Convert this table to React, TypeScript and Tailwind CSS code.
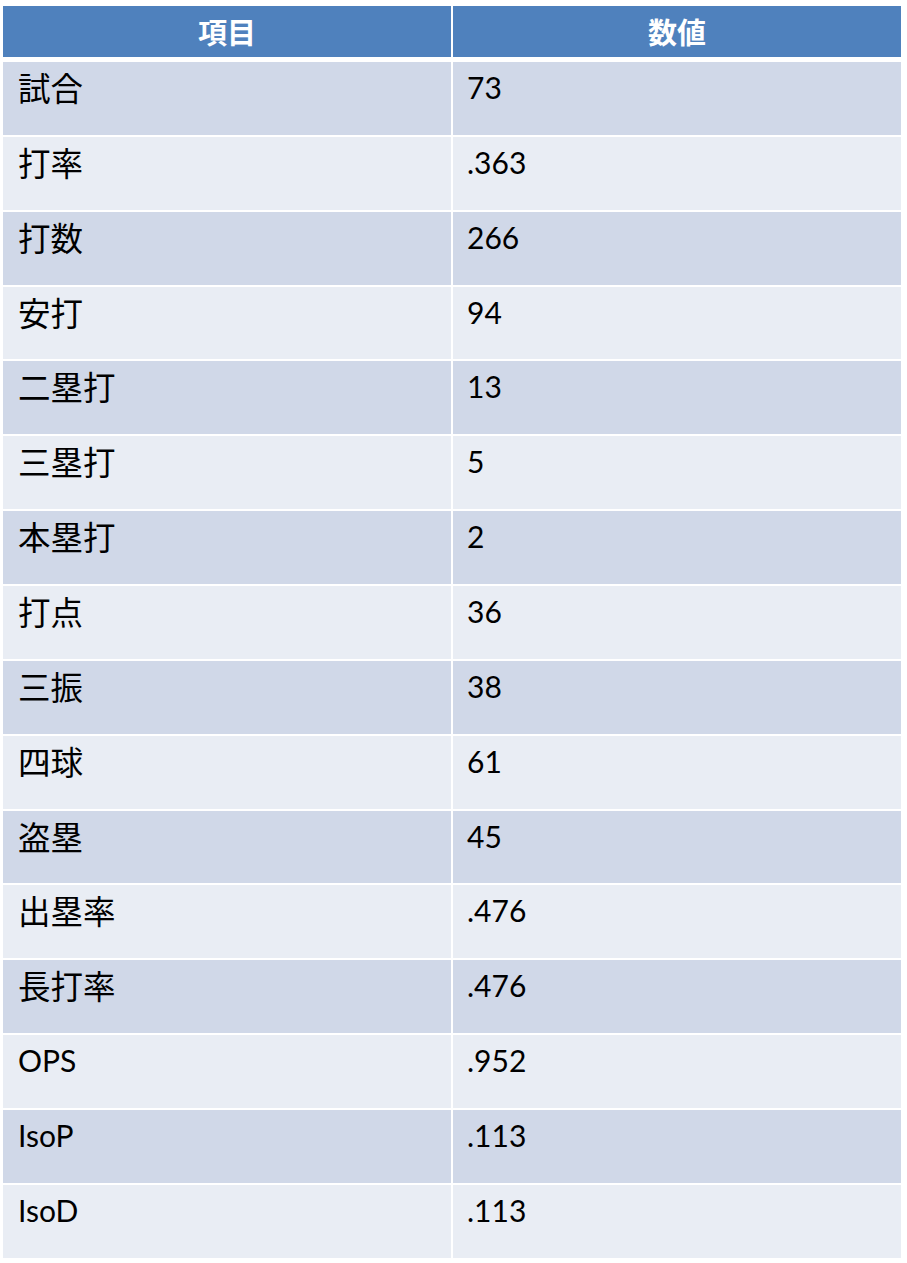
import React from "react";

const rows: [string, string][] = [
  ["試合", "73"],
  ["打率", ".363"],
  ["打数", "266"],
  ["安打", "94"],
  ["二塁打", "13"],
  ["三塁打", "5"],
  ["本塁打", "2"],
  ["打点", "36"],
  ["三振", "38"],
  ["四球", "61"],
  ["盗塁", "45"],
  ["出塁率", ".476"],
  ["長打率", ".476"],
  ["OPS", ".952"],
  ["IsoP", ".113"],
  ["IsoD", ".113"],
];

const isLatin = (s: string) => /^[A-Za-z0-9.]+$/.test(s);

export default function App() {
  return (
    <div className="w-[907px] h-[1263px] bg-white pt-[6px] pl-[3px]">
      <div className="w-[898px] flex flex-col">
        <div className="grid grid-cols-2 gap-x-[2px] h-[51px] mb-[5px]">
          <div className="bg-[#4f81bd] flex items-center justify-center text-white font-bold text-[29px] [font-family:'Noto_Sans_CJK_JP',sans-serif] leading-none">
            項目
          </div>
          <div className="bg-[#4f81bd] flex items-center justify-center text-white font-bold text-[29px] [font-family:'Noto_Sans_CJK_JP',sans-serif] leading-none">
            数値
          </div>
        </div>
        <div className="flex flex-col gap-y-[2px]">
          {rows.map(([label, value], i) => {
            const bg = i % 2 === 0 ? "bg-[#d0d8e8]" : "bg-[#e9edf4]";
            return (
              <div key={i} className="grid grid-cols-2 gap-x-[2px] h-[72.87px]">
                <div className={`${bg} pl-[15px] pt-[7px] leading-[36px] text-black [font-family:Lato,'Noto_Sans_CJK_JP',sans-serif] text-[30px]`}>
                  {isLatin(label) ? (
                    <span>{label}</span>
                  ) : (
                    <span className="text-[32.5px] [font-family:'Noto_Sans_CJK_JP',sans-serif]">{label}</span>
                  )}
                </div>
                <div className={`${bg} pl-[14px] pt-[7px] leading-[36px] text-black [font-family:Lato,sans-serif] text-[30px]`}>
                  {value}
                </div>
              </div>
            );
          })}
        </div>
      </div>
    </div>
  );
}
